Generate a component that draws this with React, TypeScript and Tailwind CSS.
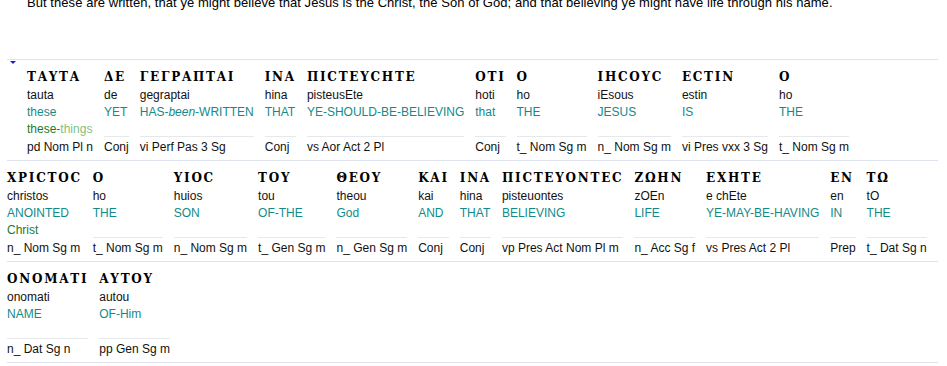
type Word = {
  gk: string;
  tr: string;
  gloss: React.ReactNode;
  extra?: React.ReactNode;
  morph: string;
};

const row1: Word[] = [
  {
    gk: "ΤΑΥΤΑ",
    tr: "tauta",
    gloss: "these",
    extra: (
      <>
        <span className="text-[#1f7a1f]">these-</span>
        <span className="text-[#7fbf7f]">things</span>
      </>
    ),
    morph: "pd Nom Pl n",
  },
  { gk: "ΔΕ", tr: "de", gloss: "YET", morph: "Conj" },
  {
    gk: "ΓΕΓΡΑΠΤΑΙ",
    tr: "gegraptai",
    gloss: (
      <>
        HAS-<i>been</i>-WRITTEN
      </>
    ),
    morph: "vi Perf Pas 3 Sg",
  },
  { gk: "ΙΝΑ", tr: "hina", gloss: "THAT", morph: "Conj" },
  { gk: "ΠΙϹΤΕΥϹΗΤΕ", tr: "pisteusEte", gloss: "YE-SHOULD-BE-BELIEVING", morph: "vs Aor Act 2 Pl" },
  { gk: "ΟΤΙ", tr: "hoti", gloss: "that", morph: "Conj" },
  { gk: "Ο", tr: "ho", gloss: "THE", morph: "t_ Nom Sg m" },
  { gk: "ΙΗϹΟΥϹ", tr: "iEsous", gloss: "JESUS", morph: "n_ Nom Sg m" },
  { gk: "ΕϹΤΙΝ", tr: "estin", gloss: "IS", morph: "vi Pres vxx 3 Sg" },
  { gk: "Ο", tr: "ho", gloss: "THE", morph: "t_ Nom Sg m" },
];

const row2: Word[] = [
  {
    gk: "ΧΡΙϹΤΟϹ",
    tr: "christos",
    gloss: "ANOINTED",
    extra: <span className="text-[#1f7a1f]">Christ</span>,
    morph: "n_ Nom Sg m",
  },
  { gk: "Ο", tr: "ho", gloss: "THE", morph: "t_ Nom Sg m" },
  { gk: "ΥΙΟϹ", tr: "huios", gloss: "SON", morph: "n_ Nom Sg m" },
  { gk: "ΤΟΥ", tr: "tou", gloss: "OF-THE", morph: "t_ Gen Sg m" },
  { gk: "ΘΕΟΥ", tr: "theou", gloss: "God", morph: "n_ Gen Sg m" },
  { gk: "ΚΑΙ", tr: "kai", gloss: "AND", morph: "Conj" },
  { gk: "ΙΝΑ", tr: "hina", gloss: "THAT", morph: "Conj" },
  { gk: "ΠΙϹΤΕΥΟΝΤΕϹ", tr: "pisteuontes", gloss: "BELIEVING", morph: "vp Pres Act Nom Pl m" },
  { gk: "ΖΩΗΝ", tr: "zOEn", gloss: "LIFE", morph: "n_ Acc Sg f" },
  { gk: "ΕΧΗΤΕ", tr: "e chEte", gloss: "YE-MAY-BE-HAVING", morph: "vs Pres Act 2 Pl" },
  { gk: "ΕΝ", tr: "en", gloss: "IN", morph: "Prep" },
  { gk: "ΤΩ", tr: "tO", gloss: "THE", morph: "t_ Dat Sg n" },
];

const row3: Word[] = [
  { gk: "ΟΝΟΜΑΤΙ", tr: "onomati", gloss: "NAME", morph: "n_ Dat Sg n" },
  { gk: "ΑΥΤΟΥ", tr: "autou", gloss: "OF-Him", morph: "pp Gen Sg m" },
];

function WordCol({ w }: { w: Word }) {
  return (
    <div className="flex flex-col whitespace-nowrap">
      <div className="h-[19px] font-['DejaVu_Serif',serif] text-[12px] font-bold leading-[19px] tracking-[1.75px] text-black">
        {w.gk}
      </div>
      <div className="h-[17px] leading-[17px] text-[#111]">{w.tr}</div>
      <div className="h-[17px] leading-[17px] text-[#138a8a]">{w.gloss}</div>
      <div className="h-[15px] leading-[17px]">{w.extra}</div>
      <div
        className={
          "h-[21px] border-t leading-[20px] text-[#111] " +
          (w.extra ? "border-transparent" : "border-[#e6e8ec]")
        }
      >
        {w.morph}
      </div>
    </div>
  );
}

function Row({ words, first }: { words: Word[]; first?: boolean }) {
  return (
    <div
      className={
        "flex border-b border-[#dfe3ef] pb-[3px] pt-[8px] " + (first ? "border-t" : "")
      }
    >
      {first && (
        <div className="w-[20px] shrink-0">
          <div className="-mt-[7px] ml-[3px] h-0 w-0 border-x-[3px] border-t-[3px] border-x-transparent border-t-[#1c1cd8]" />
        </div>
      )}
      <div className="flex gap-x-[11px]">
        {words.map((w, i) => (
          <WordCol key={i} w={w} />
        ))}
      </div>
    </div>
  );
}

export default function App() {
  return (
    <div className="h-[366px] w-[947px] overflow-hidden bg-white font-['Liberation_Sans',Arial,sans-serif] text-[12px]">
      <div className="-mt-[5px] flex">
        <svg width="8" height="10" viewBox="0 0 8 10" className="mt-[-2px] shrink-0">
          <path d="M1 4 L2 7 L3 4 M4 4 L5 7 L6 4" stroke="#a9a4ee" strokeWidth="1" fill="none" />
        </svg>
        <div className="pl-[19px] text-[13px] leading-[15px] tracking-[0.06px] text-black">
          But these are written, that ye might believe that Jesus is the Christ, the Son of God; and
          that believing ye might have life through his name.
        </div>
      </div>
      <div className="ml-[7px] mt-[49px] w-[931px]">
        <Row words={row1} first />
        <Row words={row2} />
        <Row words={row3} />
      </div>
    </div>
  );
}
